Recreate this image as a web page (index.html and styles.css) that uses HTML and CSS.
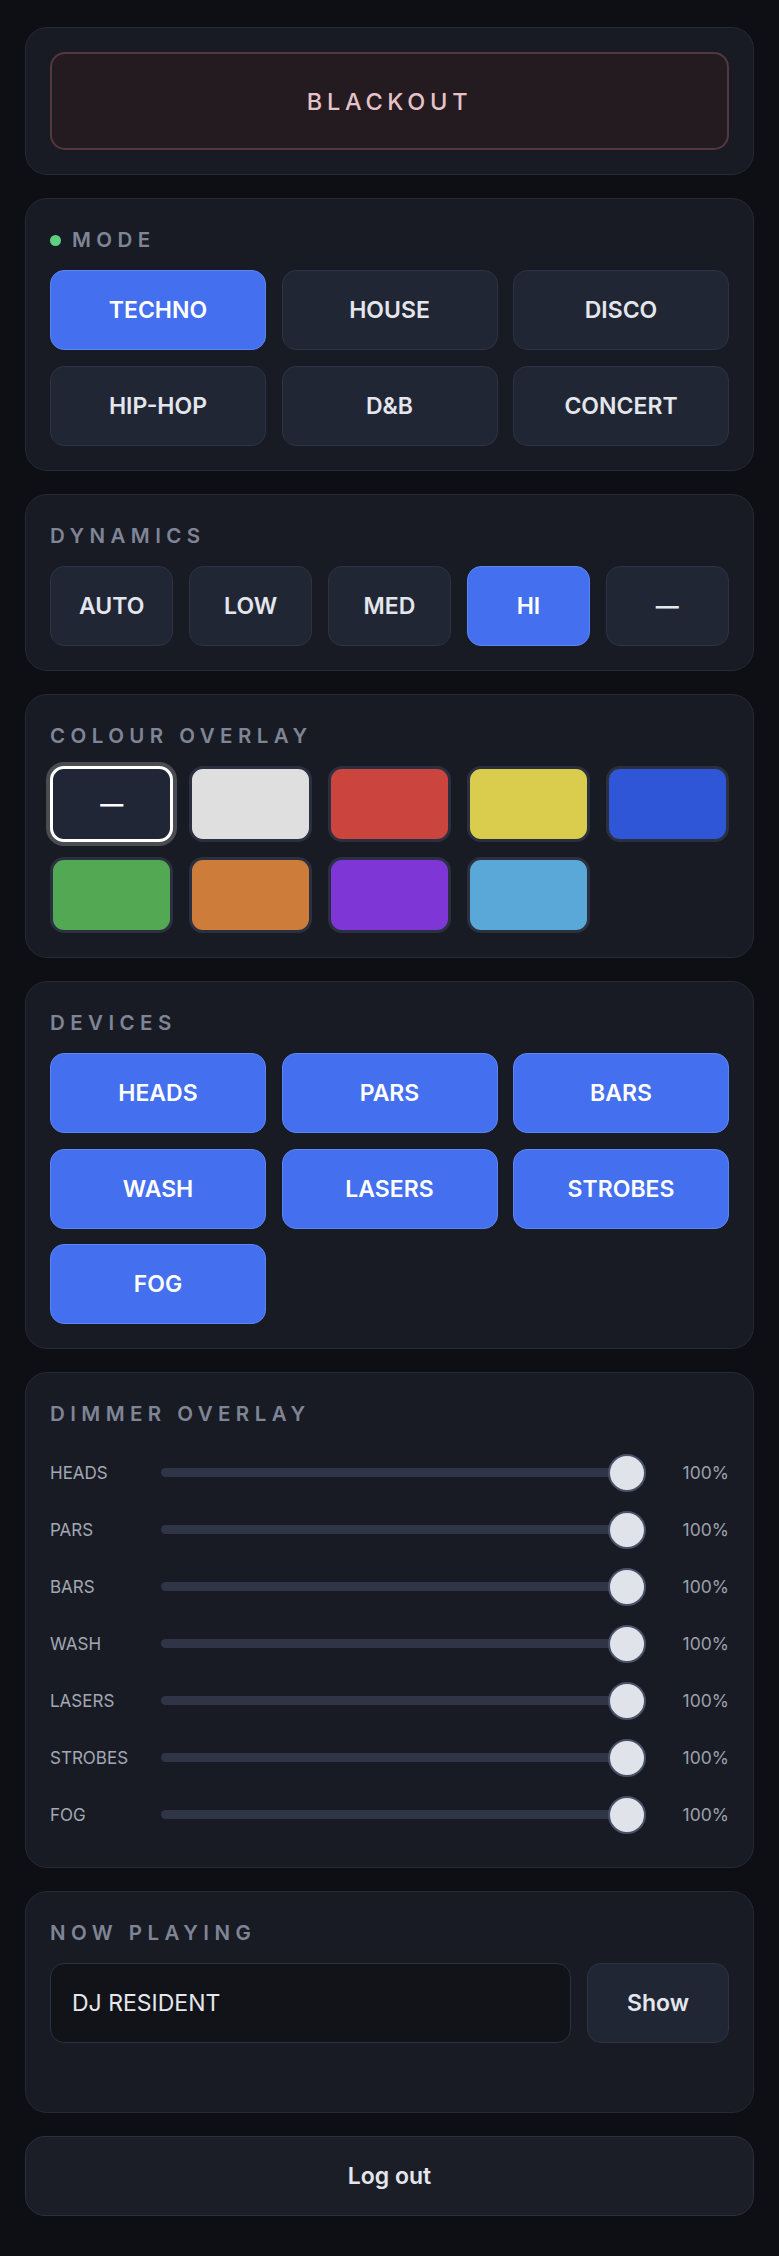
FILE: index.html
```html
<!DOCTYPE html>
<html lang="en">
<head>
<meta charset="utf-8">
<title>Lighting Control</title>
<link rel="stylesheet" href="styles.css">
</head>
<body>
<main class="panel">
  <section class="card">
    <button class="blackout">BLACKOUT</button>
  </section>

  <section class="card">
    <h2 class="label"><span class="dot"></span>MODE</h2>
    <div class="grid grid-3">
      <button class="btn active">TECHNO</button>
      <button class="btn">HOUSE</button>
      <button class="btn">DISCO</button>
      <button class="btn">HIP-HOP</button>
      <button class="btn">D&amp;B</button>
      <button class="btn">CONCERT</button>
    </div>
  </section>

  <section class="card">
    <h2 class="label">DYNAMICS</h2>
    <div class="grid grid-5">
      <button class="btn">AUTO</button>
      <button class="btn">LOW</button>
      <button class="btn">MED</button>
      <button class="btn active">HI</button>
      <button class="btn">—</button>
    </div>
  </section>

  <section class="card">
    <h2 class="label">COLOUR OVERLAY</h2>
    <div class="grid grid-5">
      <button class="swatch swatch-none selected">—</button>
      <button class="swatch swatch-white"></button>
      <button class="swatch swatch-red"></button>
      <button class="swatch swatch-yellow"></button>
      <button class="swatch swatch-blue"></button>
      <button class="swatch swatch-green"></button>
      <button class="swatch swatch-orange"></button>
      <button class="swatch swatch-purple"></button>
      <button class="swatch swatch-sky"></button>
    </div>
  </section>

  <section class="card">
    <h2 class="label">DEVICES</h2>
    <div class="grid grid-3">
      <button class="btn active">HEADS</button>
      <button class="btn active">PARS</button>
      <button class="btn active">BARS</button>
      <button class="btn active">WASH</button>
      <button class="btn active">LASERS</button>
      <button class="btn active">STROBES</button>
      <button class="btn active">FOG</button>
    </div>
  </section>

  <section class="card">
    <h2 class="label">DIMMER OVERLAY</h2>
    <div class="sliders">
      <div class="slider-row"><span class="slider-name">HEADS</span><input class="range" type="range" min="0" max="100" value="100"><span class="slider-value">100%</span></div>
      <div class="slider-row"><span class="slider-name">PARS</span><input class="range" type="range" min="0" max="100" value="100"><span class="slider-value">100%</span></div>
      <div class="slider-row"><span class="slider-name">BARS</span><input class="range" type="range" min="0" max="100" value="100"><span class="slider-value">100%</span></div>
      <div class="slider-row"><span class="slider-name">WASH</span><input class="range" type="range" min="0" max="100" value="100"><span class="slider-value">100%</span></div>
      <div class="slider-row"><span class="slider-name">LASERS</span><input class="range" type="range" min="0" max="100" value="100"><span class="slider-value">100%</span></div>
      <div class="slider-row"><span class="slider-name">STROBES</span><input class="range" type="range" min="0" max="100" value="100"><span class="slider-value">100%</span></div>
      <div class="slider-row"><span class="slider-name">FOG</span><input class="range" type="range" min="0" max="100" value="100"><span class="slider-value">100%</span></div>
    </div>
  </section>

  <section class="card">
    <h2 class="label">NOW PLAYING</h2>
    <div class="now-row">
      <input class="text-input" type="text" value="DJ RESIDENT">
      <button class="btn">Show</button>
    </div>
    <div class="status"></div>
  </section>

  <button class="logout">Log out</button>
</main>
</body>
</html>
```

FILE: styles.css
```css
* {
  box-sizing: border-box;
}

html,
body {
  margin: 0;
  background: #0e0f14;
}

body {
  font-family: Inter, "Noto Sans", "Liberation Sans", sans-serif;
  color: #e4e6ed;
}

button,
input {
  font: inherit;
  color: inherit;
}

.panel {
  display: flex;
  flex-direction: column;
  gap: 23px;
  padding: 27px 25px 40px;
}

.card {
  background: #181b23;
  border: 1px solid #262a36;
  border-radius: 22px;
  padding: 24px;
}

.blackout {
  display: block;
  width: 100%;
  height: 98px;
  background: #241b21;
  border: 2px solid #55373f;
  border-radius: 15px;
  color: #e6c2c8;
  font-size: 23.5px;
  font-weight: 500;
  letter-spacing: 0.2em;
}

.label {
  display: flex;
  align-items: center;
  gap: 11px;
  margin: 0 0 16px;
  padding-top: 3px;
  height: 31px;
  font-size: 20.5px;
  line-height: 28px;
  font-weight: 600;
  letter-spacing: 0.265em;
  color: #7f8596;
}

.dot {
  width: 11px;
  height: 11px;
  border-radius: 50%;
  background: #5fd07f;
  flex: none;
}

.grid {
  display: grid;
  gap: 15.5px;
}

.grid-3 {
  grid-template-columns: repeat(3, 1fr);
}

.grid-5 {
  grid-template-columns: repeat(5, 1fr);
}

.btn {
  height: 80px;
  background: #212634;
  border: 1.5px solid #2c3243;
  border-radius: 14px;
  color: #e4e6ed;
  font-size: 23px;
  font-weight: 600;
}

.btn.active {
  background: #446fee;
  border-color: #5c86f5;
  color: #ffffff;
}

.swatch {
  height: 76px;
  border: 3px solid #2b3040;
  border-radius: 14px;
  color: #ffffff;
  font-size: 23px;
  font-weight: 600;
}

.swatch.selected {
  border-color: #ffffff;
  box-shadow: 0 0 0 4px #4b4c52;
}

.swatch-none { background: #212636; }
.swatch-white { background: #dfdfdf; }
.swatch-red { background: #cb443d; }
.swatch-yellow { background: #dacd4e; }
.swatch-blue { background: #3056d8; }
.swatch-green { background: #52a853; }
.swatch-orange { background: #ce7c3a; }
.swatch-purple { background: #7e37d6; }
.swatch-sky { background: #5aa8d8; }

.sliders {
  display: flex;
  flex-direction: column;
}

.slider-row {
  display: grid;
  grid-template-columns: 94px 1fr 67px;
  column-gap: 16.5px;
  align-items: center;
  height: 57px;
}

.slider-name {
  font-size: 17px;
  color: #a3a8b4;
}

.slider-value {
  font-size: 17.5px;
  color: #9ca1ad;
  text-align: right;
}

.range {
  -webkit-appearance: none;
  appearance: none;
  width: 100%;
  height: 40px;
  margin: 0;
  background: transparent;
}

.range::-webkit-slider-runnable-track {
  height: 9px;
  background: #2f3546;
  border-radius: 5px;
}

.range::-webkit-slider-thumb {
  -webkit-appearance: none;
  appearance: none;
  width: 38px;
  height: 38px;
  margin-top: -14.5px;
  border-radius: 50%;
  background: #e1e3eb;
  border: 2px solid #4a5068;
}

.now-row {
  display: grid;
  grid-template-columns: 1fr 142px;
  gap: 16px;
}

.text-input {
  height: 80px;
  background: #111318;
  border: 1.5px solid #2c3141;
  border-radius: 14px;
  padding: 0 21px;
  font-size: 23px;
  color: #e6e7ec;
  outline: none;
}

.status {
  height: 45px;
}

.logout {
  height: 80px;
  background: #1b1e27;
  border: 1.5px solid #2b3040;
  border-radius: 20px;
  color: #e4e6ed;
  font-size: 23px;
  font-weight: 600;
}
```
